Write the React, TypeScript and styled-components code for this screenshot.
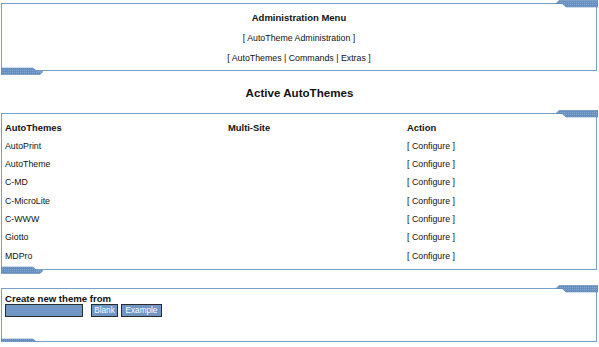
import React from "react";
import styled, { createGlobalStyle } from "styled-components";

const GlobalStyle = createGlobalStyle`
  html, body {
    margin: 0;
    padding: 0;
    background: #fff;
    font-family: "Liberation Sans", Arial, sans-serif;
    color: #111;
  }
`;

const Page = styled.div`
  width: 599px;
  padding-top: 3px;
`;

const Panel = styled.section<{ $h?: number }>`
  position: relative;
  margin: 0 2px 0 1px;
  border: 1px solid #78a0c7;
  box-sizing: border-box;
  ${(p) => (p.$h ? `height: ${p.$h}px;` : "")}
`;

const TabSvg = styled.svg<{ $flip?: boolean }>`
  position: absolute;
  width: 42px;
  height: 8px;
  ${(p) =>
    p.$flip
      ? `left: -1px; bottom: -5px; transform: rotate(180deg);`
      : `right: -2px; top: -4px;`}
`;

const Tab = ({ flip, id }: { flip?: boolean; id: string }) => (
  <TabSvg $flip={flip} viewBox="0 0 42 8">
    <defs>
      <pattern id={id} width="2" height="2" patternUnits="userSpaceOnUse">
        <rect width="2" height="2" fill="#6790c0" />
        <rect width="1" height="1" fill="#82a6cf" />
      </pattern>
    </defs>
    <polygon
      points="0,3.5 3,0.5 42,0.5 42,7 10,7 6,3.5"
      fill={`url(#${id})`}
      stroke="#5883b4"
      strokeWidth="0.6"
    />
  </TabSvg>
);

const Menu = styled.div`
  display: flex;
  flex-direction: column;
  align-items: center;
  padding-top: 8px;
  gap: 8px;
  font-size: 8.8px;
`;

const MenuTitle = styled.div`
  font-weight: bold;
  font-size: 9.5px;
  line-height: 12px;
`;

const MenuLine = styled.div`
  line-height: 12px;
`;

const Heading = styled.h1`
  margin: 0;
  height: 42px;
  display: flex;
  align-items: center;
  justify-content: center;
  font-size: 11.6px;
  font-weight: bold;
`;

const Table = styled.div`
  display: grid;
  grid-template-columns: 223px 179px 1fr;
  grid-auto-rows: 18.3px;
  align-items: center;
  padding: 4.4px 0 4px 3px;
  font-size: 8.8px;
`;

const HeadCell = styled.div`
  font-weight: bold;
  font-size: 9.4px;
`;

const Cell = styled.div``;

const Gap = styled.div`
  height: 18px;
`;

const CreateForm = styled.div`
  padding: 4px 0 0 3px;
`;

const FormLabel = styled.div`
  font-weight: bold;
  font-size: 9.6px;
  line-height: 11px;
`;

const FormRow = styled.div`
  display: flex;
  gap: 3px;
`;

const dotted = `
  background-color: #6f96c5;
  background-image: radial-gradient(#8eaed4 0.5px, transparent 0.6px);
  background-size: 2px 2px;
`;

const Field = styled.div`
  width: 78px;
  height: 13px;
  box-sizing: border-box;
  border: 1px solid #2b2b2b;
  ${dotted}
  margin-right: 5px;
`;

const Btn = styled.button<{ $w: number }>`
  width: ${(p) => p.$w}px;
  height: 13px;
  box-sizing: border-box;
  border: 1px solid #2b2b2b;
  ${dotted}
  color: #fff;
  font-family: "Liberation Sans", Arial, sans-serif;
  font-size: 8.2px;
  padding: 0;
  line-height: 11px;
`;

const themes = ["AutoPrint", "AutoTheme", "C-MD", "C-MicroLite", "C-WWW", "Giotto", "MDPro"];

export default function App() {
  return (
    <Page>
      <GlobalStyle />
      <Panel $h={68}>
        <Tab id="t1" />
        <Menu>
          <MenuTitle>Administration Menu</MenuTitle>
          <MenuLine>[ AutoTheme Administration ]</MenuLine>
          <MenuLine>[ AutoThemes | Commands | Extras ]</MenuLine>
        </Menu>
        <Tab id="b1" flip />
      </Panel>
      <Heading>Active AutoThemes</Heading>
      <Panel $h={157}>
        <Tab id="t2" />
        <Table>
          <HeadCell>AutoThemes</HeadCell>
          <HeadCell>Multi-Site</HeadCell>
          <HeadCell>Action</HeadCell>
          {themes.map((t) => (
            <React.Fragment key={t}>
              <Cell>{t}</Cell>
              <Cell />
              <Cell>[ Configure ]</Cell>
            </React.Fragment>
          ))}
        </Table>
        <Tab id="b2" flip />
      </Panel>
      <Gap />
      <Panel $h={54}>
        <Tab id="t3" />
        <CreateForm>
          <FormLabel>Create new theme from</FormLabel>
          <FormRow>
            <Field />
            <Btn $w={27}>Blank</Btn>
            <Btn $w={41}>Example</Btn>
          </FormRow>
        </CreateForm>
        <Tab id="b3" flip />
      </Panel>
    </Page>
  );
}
